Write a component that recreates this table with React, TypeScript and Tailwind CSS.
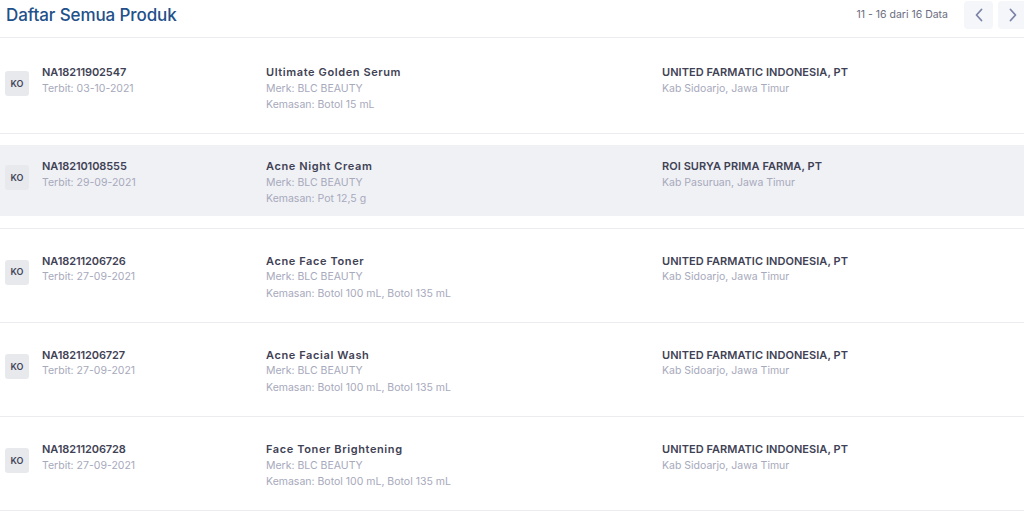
import React from "react";

type Item = {
  code: string;
  date: string;
  name: string;
  merk: string;
  kemasan: string;
  company: string;
  location: string;
  active?: boolean;
};

const items: Item[] = [
  { code: "NA18211902547", date: "03-10-2021", name: "Ultimate Golden Serum", merk: "BLC BEAUTY", kemasan: "Botol 15 mL", company: "UNITED FARMATIC INDONESIA, PT", location: "Kab Sidoarjo, Jawa Timur" },
  { code: "NA18210108555", date: "29-09-2021", name: "Acne Night Cream", merk: "BLC BEAUTY", kemasan: "Pot 12,5 g", company: "ROI SURYA PRIMA FARMA, PT", location: "Kab Pasuruan, Jawa Timur", active: true },
  { code: "NA18211206726", date: "27-09-2021", name: "Acne Face Toner", merk: "BLC BEAUTY", kemasan: "Botol 100 mL, Botol 135 mL", company: "UNITED FARMATIC INDONESIA, PT", location: "Kab Sidoarjo, Jawa Timur" },
  { code: "NA18211206727", date: "27-09-2021", name: "Acne Facial Wash", merk: "BLC BEAUTY", kemasan: "Botol 100 mL, Botol 135 mL", company: "UNITED FARMATIC INDONESIA, PT", location: "Kab Sidoarjo, Jawa Timur" },
  { code: "NA18211206728", date: "27-09-2021", name: "Face Toner Brightening", merk: "BLC BEAUTY", kemasan: "Botol 100 mL, Botol 135 mL", company: "UNITED FARMATIC INDONESIA, PT", location: "Kab Sidoarjo, Jawa Timur" },
];

function Chevron({ dir }: { dir: "left" | "right" }) {
  return (
    <svg width="10" height="14" viewBox="0 0 10 14" fill="none">
      {dir === "left" ? (
        <path d="M7.5 1.5L2.5 7l5 5.5" stroke="#7b84a8" strokeWidth="1.8" strokeLinecap="round" strokeLinejoin="round" />
      ) : (
        <path d="M2.5 1.5L7.5 7l-5 5.5" stroke="#7b84a8" strokeWidth="1.8" strokeLinecap="round" strokeLinejoin="round" />
      )}
    </svg>
  );
}

export default function App() {
  return (
    <div className="w-[1024px] h-[512px] overflow-hidden bg-white" style={{ fontFamily: "Inter, 'Noto Sans', sans-serif" }}>
      <div className="flex items-start justify-between h-[38px] border-b border-[#ececf0]">
        <h1 className="pl-[6px] pt-[4px] text-[17px] leading-[22px] font-medium text-[#22508a] tracking-[-0.1px]">Daftar Semua Produk</h1>
        <div className="flex items-center">
          <span className="text-[10.5px] leading-[28px] pt-[1px] text-[#6b6d80] mr-[16px]">11 - 16 dari 16 Data</span>
          <button className="w-[29px] h-[28px] rounded-[4px] bg-[#f5f6f9] flex items-center justify-center mr-[5px]">
            <Chevron dir="left" />
          </button>
          <button className="w-[29px] h-[28px] rounded-[4px] bg-[#f5f6f9] flex items-center justify-center -mr-[3px]">
            <Chevron dir="right" />
          </button>
        </div>
      </div>
      <div className="mt-[2px]">
        {items.map((it) => (
          <div key={it.code} className="border-b border-[#ececf0] pt-[11px] pb-[11.3px]">
            <div className={`h-[71px] flex items-start pt-[13px] ${it.active ? "bg-[#f0f1f5]" : ""}`}>
              <div className="w-[266px] flex items-start">
                <div className="ml-[5px] mt-[7px] w-[24px] h-[25px] rounded-[3px] bg-[#e8e9ed] flex items-center justify-center text-[9px] font-semibold text-[#44465a]">KO</div>
                <div className="ml-[13px]">
                  <div className="text-[11px] leading-[16px] font-semibold text-[#3f4255] tracking-[-0.1px]">{it.code}</div>
                  <div className="text-[10.5px] leading-[16px] pt-[0.5px] text-[#a7a9bc]">Terbit: {it.date}</div>
                </div>
              </div>
              <div className="w-[396px]">
                <div className="text-[11px] leading-[16px] font-semibold text-[#3f4255] tracking-[0.6px]">{it.name}</div>
                <div className="text-[10.5px] leading-[16.5px] pt-[0.5px] text-[#a7a9bc]">Merk: {it.merk}</div>
                <div className="text-[10.5px] leading-[16.5px] text-[#a7a9bc]">Kemasan: {it.kemasan}</div>
              </div>
              <div className="flex-1">
                <div className="text-[11px] leading-[16px] font-semibold text-[#3f4255] tracking-[0.05px]">{it.company}</div>
                <div className="text-[10.5px] leading-[16px] pt-[0.5px] text-[#a7a9bc]">{it.location}</div>
              </div>
            </div>
          </div>
        ))}
      </div>
    </div>
  );
}
